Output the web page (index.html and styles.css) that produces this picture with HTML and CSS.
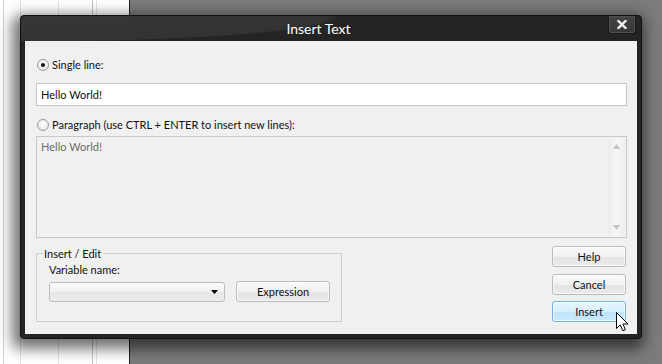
FILE: index.html
```html
<!DOCTYPE html>
<html>
<head>
<meta charset="utf-8">
<link rel="stylesheet" href="styles.css">
</head>
<body>
<div class="desktop">
  <div class="dialog">
    <div class="titlebar">
      <span class="title">Insert Text</span>
      <button class="close" aria-label="Close">
        <svg width="10" height="9" viewBox="0 0 10 9"><path d="M1.5 1 L8.5 8 M8.5 1 L1.5 8" stroke="#ececec" stroke-width="2.4" stroke-linecap="square" fill="none"/></svg>
      </button>
    </div>
    <div class="content">
      <label class="radio-row"><span class="radio checked"></span>Single line:</label>
      <div class="input">Hello World!</div>
      <label class="radio-row para"><span class="radio"></span>Paragraph (use CTRL + ENTER to insert new lines):</label>
      <div class="textarea">
        <span class="ta-text">Hello World!</span>
        <div class="scrollbar">
          <svg width="7" height="5" viewBox="0 0 7 5"><path d="M0 5 L3.5 0 L7 5 Z" fill="#c3c3c3"/></svg>
          <svg width="7" height="5" viewBox="0 0 7 5"><path d="M0 0 L3.5 5 L7 0 Z" fill="#c3c3c3"/></svg>
        </div>
      </div>
      <div class="bottom">
        <fieldset class="group">
          <legend>Insert / Edit</legend>
          <div class="var-label">Variable name:</div>
          <div class="var-row">
            <div class="combo">
              <svg width="7" height="4" viewBox="0 0 7 4"><path d="M0 0 L7 0 L3.5 4 Z" fill="#000"/></svg>
            </div>
            <button class="btn expr">Expression</button>
          </div>
        </fieldset>
        <div class="buttons">
          <button class="btn">Help</button>
          <button class="btn cancel">Cancel</button>
          <button class="btn primary">Insert</button>
        </div>
      </div>
    </div>
  </div>
  <svg class="cursor" width="13" height="20" viewBox="0 0 13 20">
    <path d="M0.5 0.5 L0.5 16.5 L4.3 12.9 L6.9 18.8 L9.4 17.7 L6.9 12 L12 12 Z" fill="#fff" stroke="#000" stroke-width="1" stroke-linejoin="miter"/>
  </svg>
</div>
</body>
</html>
```

FILE: styles.css
```css
html, body {
  margin: 0;
  padding: 0;
}
body {
  width: 662px;
  height: 364px;
  overflow: hidden;
  font-family: Lato, "Noto Sans", sans-serif;
  font-size: 11px;
  color: #111;
}
.desktop {
  position: relative;
  width: 662px;
  height: 364px;
  box-sizing: border-box;
  padding: 15px 0 0 20px;
  background:
    linear-gradient(to right, transparent 129px, #1e1e1e 129px, #1e1e1e 130px, #7b7b7b 130px),
    linear-gradient(to right, transparent 3px, #d0d0d0 3px, #d0d0d0 4px, transparent 4px),
    linear-gradient(to right, transparent 92px, #c4c4c4 92px, #c4c4c4 93px, transparent 93px),
    repeating-linear-gradient(to right, transparent 0, transparent 20px, #e2e2e2 20px, #e2e2e2 21px, transparent 21px, transparent 38px),
    #fff;
}
.dialog {
  width: 622px;
  height: 324px;
  box-sizing: border-box;
  background:
    radial-gradient(ellipse 320px 26px at 0 0, #363636 0, #333 96%, transparent 100%),
    #242424;
  border: 1px solid #111;
  border-radius: 4px;
  padding: 0 4px 4px 4px;
  box-shadow: -3px 5px 14px 5px rgba(0, 0, 0, 0.55);
  display: flex;
  flex-direction: column;
}
.titlebar {
  height: 25px;
  display: flex;
  align-items: flex-start;
}
.title {
  flex: 1;
  text-align: center;
  color: #fff;
  font-size: 14px;
  line-height: 25px;
  padding-left: 4px;
}
.close {
  margin: 0 1px 0 0;
  width: 28px;
  height: 18px;
  padding: 0;
  border: 1px solid #1a1a1a;
  border-top: none;
  border-radius: 0 0 3px 3px;
  background: linear-gradient(#444, #383838);
  box-shadow: inset 0 0 0 1px #505050;
  display: flex;
  align-items: center;
  justify-content: center;
}
.content {
  flex: 1;
  background: #f0f0f0;
  padding: 16px 10px 0 11px;
  display: flex;
  flex-direction: column;
}
.radio-row {
  display: flex;
  align-items: center;
  gap: 3px;
  height: 15px;
  line-height: 15px;
  margin-left: 1px;
}
.radio {
  width: 10px;
  height: 10px;
  border-radius: 50%;
  border: 1px solid #9a9a9a;
  background: radial-gradient(circle at 50% 40%, #fff 0, #eaeaea 70%, #dcdcdc 100%);
  box-sizing: content-box;
  display: flex;
  align-items: center;
  justify-content: center;
}
.radio.checked::after {
  content: "";
  width: 4px;
  height: 4px;
  border-radius: 50%;
  background: #111;
}
.input {
  margin-top: 11px;
  height: 21px;
  border: 1px solid #c5c5c5;
  background: #fff;
  padding: 0 4px;
  line-height: 21px;
}
.para {
  margin-top: 11px;
}
.textarea {
  margin-top: 4px;
  height: 98px;
  border: 1px solid #c8c8c8;
  background: #f1f1f1;
  display: flex;
  padding: 1px;
  color: #6d6d6d;
}
.ta-text {
  flex: 1;
  padding: 1px 3px;
  line-height: 15px;
}
.scrollbar {
  width: 17px;
  background: linear-gradient(to right, #ececec, #f6f6f6 50%, #efefef);
  border-radius: 3px;
  display: flex;
  flex-direction: column;
  justify-content: space-between;
  align-items: center;
  padding: 6px 0 6px;
}
.bottom {
  margin-top: 8px;
  display: flex;
  justify-content: space-between;
}
.group {
  margin: 0;
  width: 306px;
  box-sizing: border-box;
  height: 76px;
  border: 1px solid #cfcfcf;
  padding: 0 0 0 12px;
  min-width: 0;
}
.group legend {
  padding: 0 2px 0 1px;
  margin-left: -6px;
  line-height: 15px;
}
.var-label {
  margin-top: 1px;
  line-height: 15px;
}
.var-row {
  margin-top: 4px;
  display: flex;
  align-items: center;
  gap: 11px;
}
.combo {
  width: 176px;
  height: 20px;
  box-sizing: border-box;
  border: 1px solid #bcbcbc;
  border-radius: 3px;
  background: linear-gradient(#fbfbfb, #f0f0f0 50%, #e6e6e6 51%, #ececec);
  display: flex;
  align-items: center;
  justify-content: flex-end;
  padding-right: 6px;
}
.btn {
  font-family: inherit;
  font-size: 11px;
  color: #111;
  width: 74px;
  height: 21px;
  box-sizing: border-box;
  padding: 0;
  border: 1px solid #bababa;
  border-radius: 3px;
  background: linear-gradient(#fafafa, #f0f0f0 50%, #e4e4e4 51%, #e9e9e9);
  box-shadow: inset 0 0 0 1px rgba(255, 255, 255, 0.7);
  line-height: 19px;
}
.expr {
  width: 94px;
}
.buttons {
  display: flex;
  flex-direction: column;
  gap: 6px;
  margin-right: 1px;
}
.cancel {
  margin-top: 1px;
}
.primary {
  border-color: #6fb2e6;
  background: linear-gradient(#e8f6fd, #d6effc 50%, #bfe5fa 51%, #c7e8fa);
}
.cursor {
  position: absolute;
  left: 616px;
  top: 312px;
}
```
